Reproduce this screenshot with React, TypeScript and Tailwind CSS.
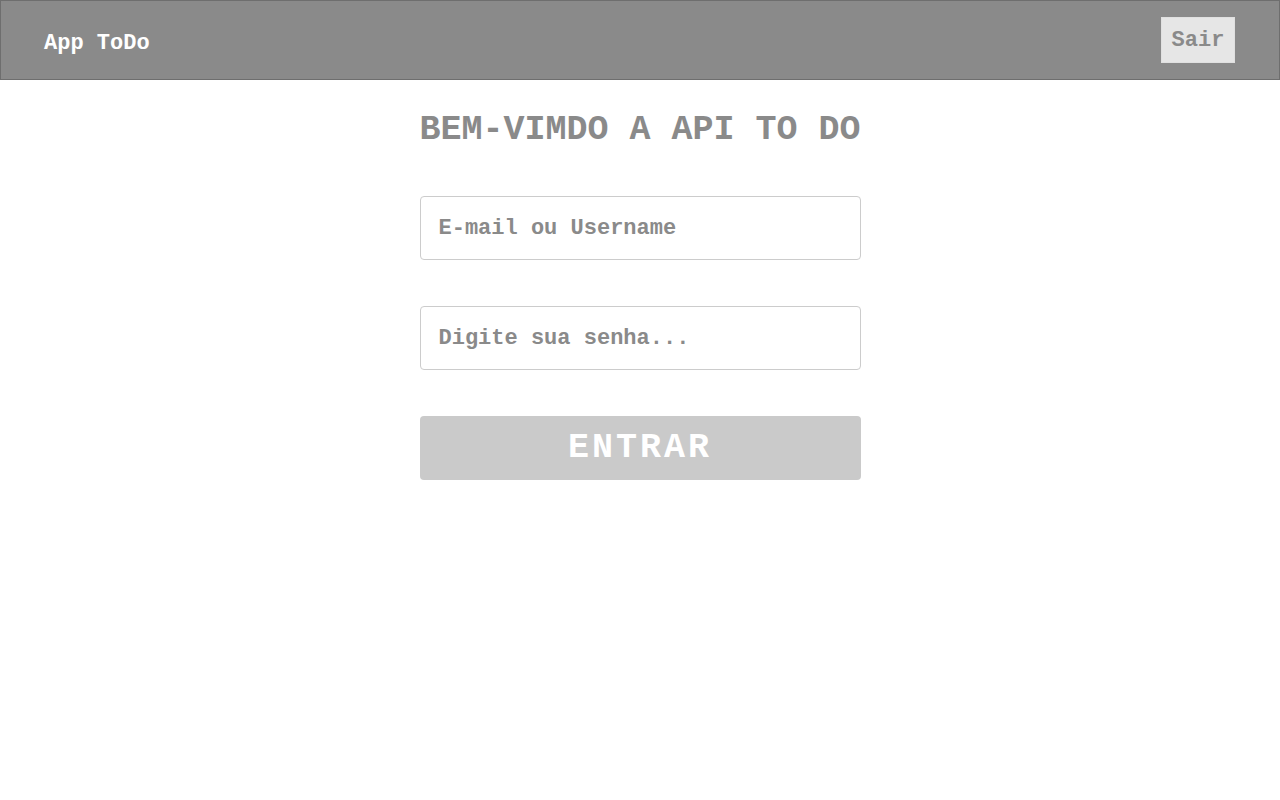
export default function App() {
    return (
        <div className="min-h-screen bg-white font-['Courier_New','Courier','Nimbus_Mono_PS','Nimbus_Mono_L','FreeMono','Liberation_Mono',monospace] font-bold">
            <header className="h-20 bg-[#8a8a8a] border border-[#6e6e6e] flex items-center justify-between pl-[43px] pr-[44px]">
                <h1 className="text-[22px] text-white mt-[6px]">App ToDo</h1>
                <button className="h-[46px] w-[74px] bg-[#e6e6e6] text-[#8a8a8a] text-[22px] border border-[#e0e0e0]">
                    Sair
                </button>
            </header>

            <main className="flex justify-center pt-[30px]">
                <form className="w-[441px] flex flex-col" onSubmit={(e) => e.preventDefault()}>
                    <h2 className="text-[35px] leading-[40px] text-[#8a8a8a] whitespace-nowrap">BEM-VIMDO A API TO DO</h2>
                    <input
                        type="text"
                        placeholder="E-mail ou Username"
                        className="mt-[46px] h-16 border border-[#cccccc] rounded px-[18px] text-[22px] text-[#8a8a8a] placeholder:text-[#8a8a8a] outline-none"
                    />
                    <input
                        type="password"
                        placeholder="Digite sua senha..."
                        className="mt-[46px] h-16 border border-[#cccccc] rounded px-[18px] text-[22px] text-[#8a8a8a] placeholder:text-[#8a8a8a] outline-none"
                    />
                    <button
                        type="submit"
                        className="mt-[46px] h-16 bg-[#cacaca] rounded text-white text-[35px] tracking-[3px]"
                    >
                        ENTRAR
                    </button>
                </form>
            </main>
        </div>
    );
}
